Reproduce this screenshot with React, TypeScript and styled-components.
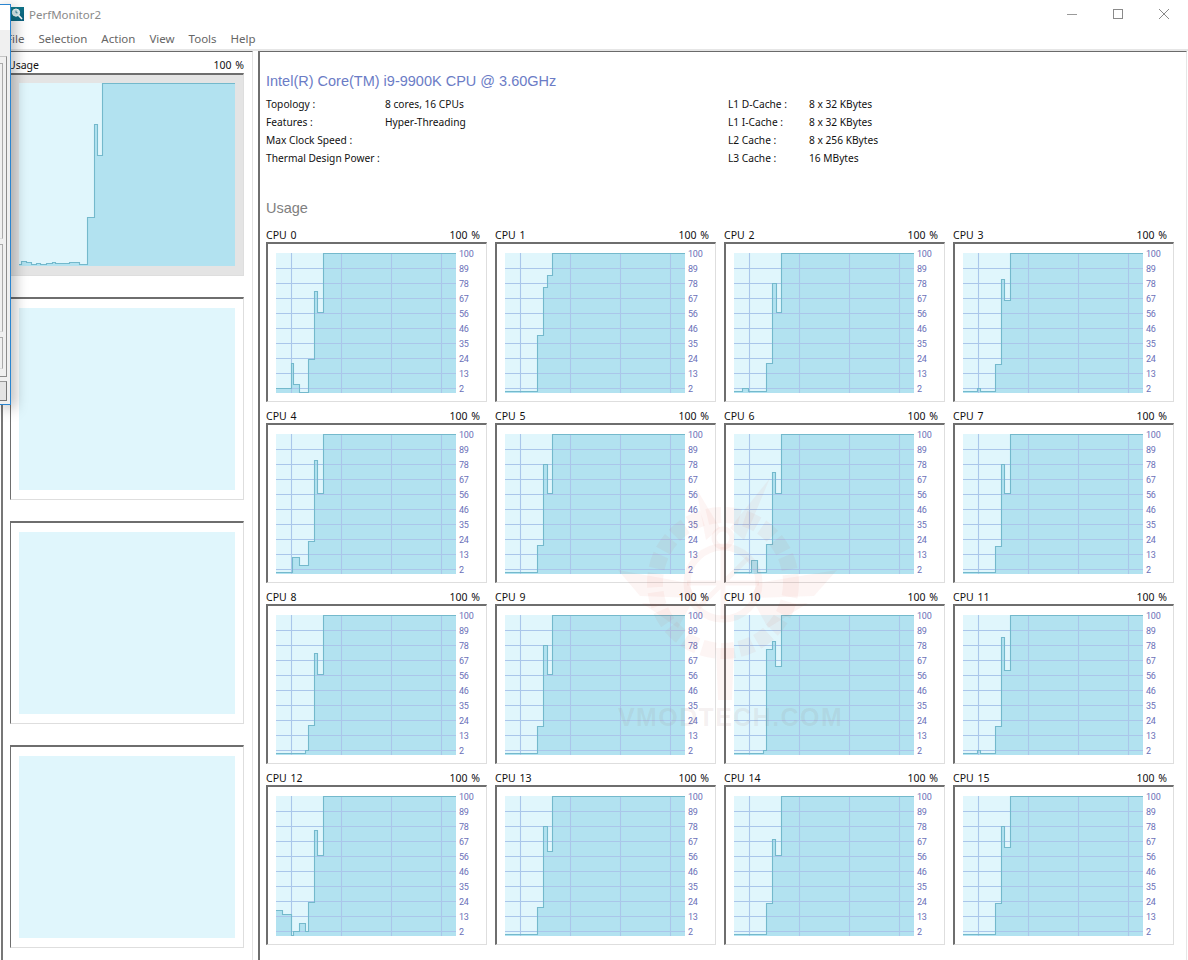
import React from "react";
import styled, { createGlobalStyle } from "styled-components";

type Step = [number, number];
type Series = { name: string; start: number; steps: Step[] };

const CPUS: Series[] = [
  { name: "CPU 0", start: 135, steps: [[15, 110], [17, 131], [23, 139], [32, 106], [38, 38], [41, 59], [47, 0]] },
  { name: "CPU 1", start: 138, steps: [[32, 82], [38, 34], [42, 22], [47, 0]] },
  { name: "CPU 2", start: 138, steps: [[8, 135], [14, 138], [32, 110], [38, 30], [42, 59], [47, 0]] },
  { name: "CPU 3", start: 138, steps: [[14, 135], [17, 138], [32, 111], [38, 26], [41, 47], [47, 0]] },
  { name: "CPU 4", start: 138, steps: [[16, 123], [23, 131], [32, 107], [38, 26], [41, 59], [47, 0]] },
  { name: "CPU 5", start: 138, steps: [[32, 111], [38, 30], [42, 59], [47, 0]] },
  { name: "CPU 6", start: 138, steps: [[17, 126], [23, 138], [32, 110], [38, 38], [41, 59], [47, 0]] },
  { name: "CPU 7", start: 138, steps: [[32, 112], [38, 30], [41, 59], [47, 0]] },
  { name: "CPU 8", start: 138, steps: [[29, 135], [32, 110], [38, 38], [41, 59], [47, 0]] },
  { name: "CPU 9", start: 138, steps: [[32, 111], [38, 30], [42, 59], [47, 0]] },
  { name: "CPU 10", start: 138, steps: [[29, 135], [32, 34], [38, 26], [41, 51], [47, 0]] },
  { name: "CPU 11", start: 138, steps: [[14, 135], [17, 138], [32, 111], [38, 22], [41, 55], [47, 0]] },
  { name: "CPU 12", start: 114, steps: [[6, 118], [15, 139], [17, 135], [23, 127], [29, 135], [32, 106], [38, 34], [41, 59], [47, 0]] },
  { name: "CPU 13", start: 138, steps: [[32, 111], [38, 30], [42, 55], [47, 0]] },
  { name: "CPU 14", start: 138, steps: [[32, 107], [38, 43], [41, 59], [47, 0]] },
  { name: "CPU 15", start: 138, steps: [[32, 107], [38, 30], [41, 51], [47, 0]] },
];

const TOTAL_STEPS: Step[] = [
  [2, 178], [7, 179], [12, 181], [17, 180], [21, 181], [27, 180], [33, 179], [36, 180],
  [50, 179], [60, 181], [68, 134], [75, 41], [78, 72], [83, 0],
];

const SCALE = ["100", "89", "78", "67", "56", "46", "35", "24", "13", "2"];
const H_GRID = [15, 30, 45, 60, 75, 90, 105, 120, 135];
const V_GRID = [15, 65, 115, 165];

const INFO = [
  ["Topology :", "8 cores, 16 CPUs", "L1 D-Cache :", "8 x 32 KBytes"],
  ["Features :", "Hyper-Threading", "L1 I-Cache :", "8 x 32 KBytes"],
  ["Max Clock Speed :", "", "L2 Cache :", "8 x 256 KBytes"],
  ["Thermal Design Power :", "", "L3 Cache :", "16 MBytes"],
];

const MENU = ["File", "Selection", "Action", "View", "Tools", "Help"];

const linePath = (start: number, steps: Step[], width: number) =>
  `M0 ${start + 0.5} ` +
  steps.map(([x, y]) => `H${x + 0.5} V${y + 0.5}`).join(" ") +
  ` H${width}`;

const UsageChart: React.FC<{ start: number; steps: Step[]; width: number; height: number; grid?: boolean }> = ({
  start,
  steps,
  width,
  height,
  grid,
}) => {
  const line = linePath(start, steps, width);
  return (
    <ChartSvg width={width} height={height} viewBox={`0 0 ${width} ${height}`}>
      <rect width={width} height={height} fill="#e0f6fc" />
      <path d={`${line} V${height} H0 Z`} fill="#b2e2f0" />
      {grid &&
        H_GRID.map((y) => <GridLine key={y} x1={0} x2={width} y1={y + 0.5} y2={y + 0.5} />)}
      {grid &&
        V_GRID.map((x) => <GridLine key={x} x1={x + 0.5} x2={x + 0.5} y1={0} y2={height} />)}
      <TraceLine d={line} />
    </ChartSvg>
  );
};

const Watermark = () => (
  <WatermarkBox>
    <svg width="224" height="225" viewBox="0 0 224 225">
      <g fill="none" stroke="#d8322a" strokeOpacity="0.05">
        <circle cx="105" cy="105" r="68" strokeWidth="16" strokeDasharray="14 5" />
        <circle cx="105" cy="105" r="36" strokeWidth="7" />
        <circle cx="105" cy="60" r="9" strokeWidth="5" />
        <path d="M69 105H141M105 69V141M80 130L130 80" strokeWidth="5" />
      </g>
      <g fill="#d8322a" fillOpacity="0.05">
        <path d="M0 92L70 105L78 120L22 118Z" />
        <path d="M219 92L140 105L132 120L196 118Z" />
        <path d="M24 125L72 128L60 150Z" />
        <path d="M190 125L138 128L150 150Z" />
        <path d="M78 10L102 50L88 62Z" />
        <path d="M152 0L112 50L126 62Z" />
        <path d="M98 170H116L114 222H100Z" />
      </g>
    </svg>
    <WatermarkText>VMODTECH.COM</WatermarkText>
  </WatermarkBox>
);

const App = () => {
  return (
    <Page>
      <GlobalStyle />
      <TitleBar>
        <AppIcon viewBox="0 0 14 14">
          <defs>
            <linearGradient id="ico" x1="0" y1="0" x2="1" y2="1">
              <stop offset="0" stopColor="#12818f" />
              <stop offset="1" stopColor="#0a5f7e" />
            </linearGradient>
          </defs>
          <rect width="14" height="14" fill="url(#ico)" />
          <circle cx="6" cy="5.6" r="3.6" fill="#d8eef2" stroke="#fff" strokeWidth="1" />
          <path d="M6 3.6V5.8H7.6" fill="none" stroke="#0a5f7e" strokeWidth="0.7" />
          <path d="M8.6 8.4L12 12" stroke="#fff" strokeWidth="1.6" />
        </AppIcon>
        <AppTitle>PerfMonitor2</AppTitle>
        <WindowButtons>
          <WindowButton>
            <svg width="10" height="10" viewBox="0 0 10 10">
              <path d="M0 5.5H10" stroke="#9a9a9a" />
            </svg>
          </WindowButton>
          <WindowButton>
            <svg width="10" height="10" viewBox="0 0 10 10">
              <rect x="0.5" y="0.5" width="9" height="9" fill="none" stroke="#8a8a8a" />
            </svg>
          </WindowButton>
          <WindowButton>
            <svg width="10" height="10" viewBox="0 0 10 10">
              <path d="M0 0L10 10M10 0L0 10" stroke="#8a8a8a" />
            </svg>
          </WindowButton>
        </WindowButtons>
      </TitleBar>
      <MenuBar>
        {MENU.map((item) => (
          <MenuItem key={item}>{item}</MenuItem>
        ))}
      </MenuBar>
      <Body>
        <LeftPanel>
          <Slot>
            <SlotLabel>
              <span>Usage</span>
              <span>100 %</span>
            </SlotLabel>
            <SlotCard $selected>
              <UsageChart start={181} steps={TOTAL_STEPS} width={216} height={183} />
            </SlotCard>
          </Slot>
          {[0, 1, 2].map((i) => (
            <Slot key={i}>
              <SlotLabel />
              <SlotCard>
                <EmptyChart />
              </SlotCard>
            </Slot>
          ))}
        </LeftPanel>
        <RightPanel>
          <CpuTitle>Intel(R) Core(TM) i9-9900K CPU @ 3.60GHz</CpuTitle>
          <InfoGrid>
            {INFO.flat().map((text, i) => (
              <InfoCell key={i}>{text}</InfoCell>
            ))}
          </InfoGrid>
          <SectionTitle>Usage</SectionTitle>
          <CpuGrid>
            {CPUS.map((cpu) => (
              <div key={cpu.name}>
                <CpuLabel>
                  <span>{cpu.name}</span>
                  <span>100 %</span>
                </CpuLabel>
                <CpuCard>
                  <UsageChart start={cpu.start} steps={cpu.steps} width={180} height={140} grid />
                  <ScaleColumn>
                    {SCALE.map((s) => (
                      <ScaleValue key={s}>{s}</ScaleValue>
                    ))}
                  </ScaleColumn>
                </CpuCard>
              </div>
            ))}
          </CpuGrid>
        </RightPanel>
      </Body>

      <DialogEdge>
        <DialogHeader />
        <DialogBody>
          <DialogGroup>
            <DialogInner $height={176} />
            <DialogInner $height={88} />
            <DialogInner $height={32} />
          </DialogGroup>
          <DialogButton />
        </DialogBody>
      </DialogEdge>
      <Watermark />
    </Page>
  );
};

const UI_FONT = `"Noto Sans", "DejaVu Sans", sans-serif`;

const GlobalStyle = createGlobalStyle`
  html, body {
    margin: 0;
    padding: 0;
    background: #fff;
  }
`;

const Page = styled.div`
  position: relative;
  width: 1188px;
  height: 960px;
  overflow: hidden;
  background: #fff;
  font-family: ${UI_FONT};
  color: #111;
`;

const TitleBar = styled.div`
  display: flex;
  align-items: center;
  height: 28px;
  padding: 0 1px 0 10px;
`;
const AppIcon = styled.svg`
  width: 14px;
  height: 14px;
  flex: none;
`;
const AppTitle = styled.div`
  margin-left: 5px;
  font-size: 11.5px;
  color: #8a8a8a;
`;
const WindowButtons = styled.div`
  display: flex;
  margin-left: auto;
`;
const WindowButton = styled.div`
  display: flex;
  justify-content: center;
  width: 46px;
  svg {
    display: block;
  }
`;

const MenuBar = styled.div`
  display: flex;
  align-items: center;
  gap: 14px;
  height: 21px;
  padding-left: 6px;
  font-size: 11.5px;
  color: #666;
`;
const MenuItem = styled.div``;

const Body = styled.div`
  display: flex;
  gap: 5px;
  height: 911px;
  padding: 0 1px;
  border-top: 2px solid #e6e6e6;
`;

const LeftPanel = styled.div`
  width: 234px;
  padding-left: 7px;
  padding-right: 8px;
  flex: none;
  box-sizing: content-box;
  border-top: 1px solid #6a6a6a;
  border-left: 2px solid #777;
  border-right: 1px solid #e2e2e2;
`;
const Slot = styled.div``;
const SlotLabel = styled.div`
  display: flex;
  align-items: flex-end;
  justify-content: space-between;
  box-sizing: border-box;
  width: 236px;
  height: 21px;
  margin-left: -2px;
  padding-bottom: 1px;
  font-size: 10.5px;
  line-height: 14px;
  word-spacing: 1px;
`;
const SlotCard = styled.div<{ $selected?: boolean }>`
  box-sizing: border-box;
  width: 234px;
  height: 203px;
  padding: ${(p) => (p.$selected ? "8px" : "9px")} 9px 0 8px;
  background: ${(p) => (p.$selected ? "#e4e4e4" : "#fff")};
  border-top: 2px solid #6e6e6e;
  border-left: 1px solid ${(p) => (p.$selected ? "#e4e4e4" : "#6e6e6e")};
  border-right: 1px solid #dedede;
  border-bottom: 1px solid #dedede;
`;
const EmptyChart = styled.div`
  width: 216px;
  height: 182px;
  background: #e0f6fc;
`;

const RightPanel = styled.div`
  flex: 1;
  padding: 20px 0 0 6px;
  border-top: 1px solid #6a6a6a;
  border-left: 2px solid #6e6e6e;
  border-right: 1px solid #e6e6e6;
`;
const CpuTitle = styled.div`
  font-family: "Liberation Sans", Arial, sans-serif;
  font-size: 14.5px;
  line-height: 18px;
  color: #6b7cc6;
`;
const InfoGrid = styled.div`
  display: grid;
  grid-template-columns: 119px 343px 81px 1fr;
  grid-auto-rows: 18px;
  margin-top: 5px;
`;
const InfoCell = styled.div`
  font-size: 10.2px;
  line-height: 18px;
  white-space: nowrap;
`;
const SectionTitle = styled.div`
  margin-top: 32px;
  font-family: "Liberation Sans", Arial, sans-serif;
  font-size: 14.5px;
  line-height: 18px;
  color: #808080;
`;
const CpuGrid = styled.div`
  display: grid;
  grid-template-columns: repeat(4, 221px);
  column-gap: 8px;
  row-gap: 7px;
  margin-top: 11px;
`;
const CpuLabel = styled.div`
  display: flex;
  justify-content: space-between;
  height: 14px;
  padding-right: 7px;
  font-size: 10.5px;
  line-height: 14px;
  word-spacing: 1px;
`;
const CpuCard = styled.div`
  display: flex;
  box-sizing: border-box;
  height: 160px;
  padding: 9px 0 0 8px;
  border-top: 2px solid #6e6e6e;
  border-left: 2px solid #6e6e6e;
  border-right: 1px solid #dedede;
  border-bottom: 1px solid #dedede;
`;
const ChartSvg = styled.svg`
  display: block;
  flex: none;
  overflow: visible;
`;
const GridLine = styled.line`
  stroke: #aac6ea;
  stroke-width: 1.1;
`;
const TraceLine = styled.path`
  fill: none;
  stroke: #74b9cc;
  stroke-width: 1.1;
`;
const ScaleColumn = styled.div`
  display: flex;
  flex-direction: column;
  height: 150px;
  margin: -6px 0 0 3px;
`;
const ScaleValue = styled.div`
  height: 15px;
  font-family: Roboto, sans-serif;
  font-size: 9px;
  line-height: 15px;
  letter-spacing: -0.2px;
  color: #6a70b8;
`;

const DialogEdge = styled.div`
  position: absolute;
  left: 0;
  top: 4px;
  display: flex;
  flex-direction: column;
  box-sizing: border-box;
  width: 11px;
  height: 401px;
  background: #f0f0f0;
  border-top: 1px solid #2a85d0;
  border-right: 1px solid #2a85d0;
  border-bottom: 1px solid #2a85d0;
  box-shadow: 3px 3px 14px rgba(0, 0, 0, 0.34);
`;
const DialogHeader = styled.div`
  height: 25px;
  flex: none;
  background: #fff;
`;
const DialogBody = styled.div`
  display: flex;
  flex-direction: column;
  flex: 1;
  padding-top: 26px;
`;
const DialogGroup = styled.div`
  display: flex;
  flex-direction: column;
  gap: 5px;
  box-sizing: border-box;
  width: 7px;
  height: 321px;
  padding: 6px 0 0;
  border-top: 1px solid #c4c4c4;
  border-right: 1px solid #8c8c8c;
  border-bottom: 1px solid #8c8c8c;
`;
const DialogInner = styled.div<{ $height: number }>`
  box-sizing: border-box;
  width: 3px;
  height: ${(p) => p.$height}px;
  border-top: 1px solid #aaa;
  border-right: 1px solid #aaa;
  border-bottom: 1px solid #ddd;
`;
const DialogButton = styled.div`
  box-sizing: border-box;
  width: 7px;
  height: 20px;
  margin-top: 4px;
  background: #e4e4e4;
  border-top: 1px solid #999;
  border-right: 1px solid #777;
  border-bottom: 1px solid #777;
`;

const WatermarkBox = styled.div`
  position: absolute;
  left: 618px;
  top: 478px;
  display: flex;
  flex-direction: column;
  pointer-events: none;
`;
const WatermarkText = styled.div`
  margin-top: 2px;
  font-family: "Liberation Sans", Arial, sans-serif;
  font-size: 25px;
  line-height: 24px;
  font-weight: 700;
  letter-spacing: 1.4px;
  white-space: nowrap;
  color: rgba(150, 110, 110, 0.1);
`;

export default App;
